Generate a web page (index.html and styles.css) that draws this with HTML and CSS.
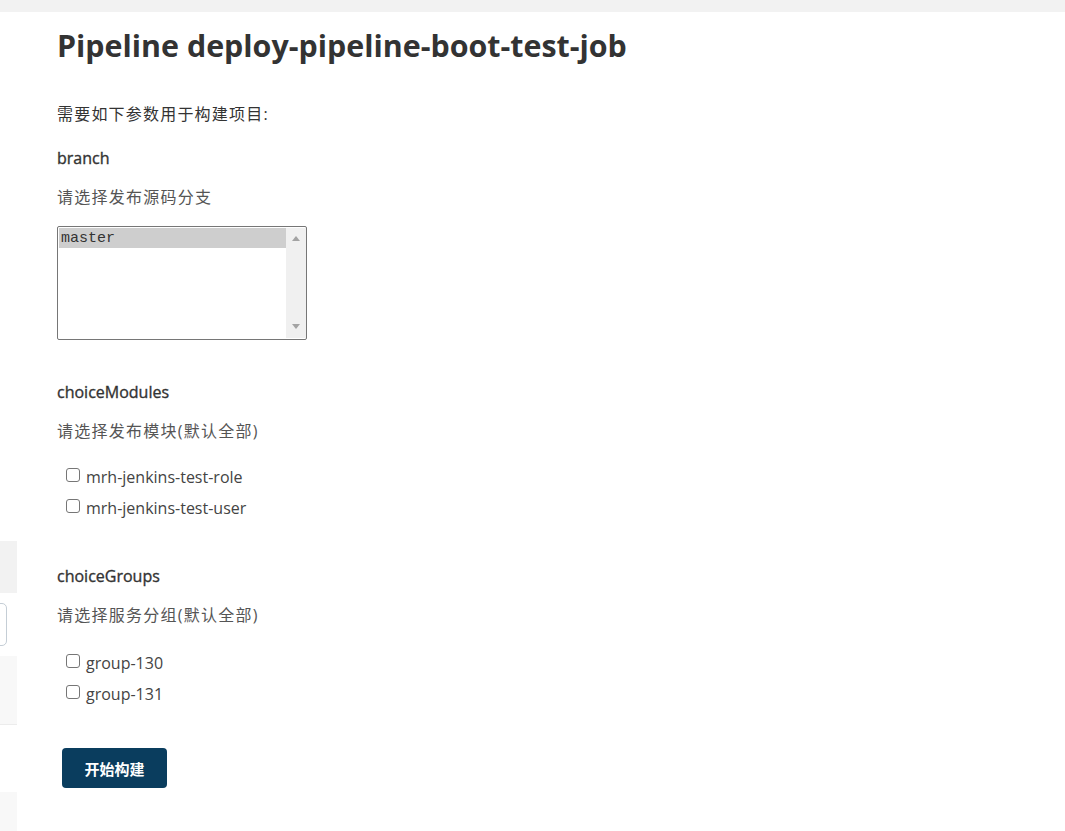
FILE: index.html
```html
<!DOCTYPE html>
<html lang="zh-CN">
<head>
<meta charset="utf-8">
<title>Pipeline deploy-pipeline-boot-test-job</title>
<link rel="stylesheet" href="styles.css">
</head>
<body>
<div class="topbar"></div>
<div class="layout">
  <aside class="side">
    <div class="side-block side-a"></div>
    <div class="side-box"></div>
    <div class="side-block side-b"></div>
    <div class="side-block side-c"></div>
  </aside>
  <main class="main">
    <h1 class="title">Pipeline deploy-pipeline-boot-test-job</h1>
    <p class="intro">需要如下参数用于构建项目:</p>

    <section class="param">
      <div class="param-name">branch</div>
      <div class="param-desc">请选择发布源码分支</div>
      <div class="listbox">
        <div class="list-items">
          <div class="list-item selected">master</div>
        </div>
        <div class="scrollbar">
          <span class="arrow up"></span>
          <span class="arrow down"></span>
        </div>
      </div>
    </section>

    <section class="param param-modules">
      <div class="param-name">choiceModules</div>
      <div class="param-desc">请选择发布模块(默认全部)</div>
      <div class="checks">
        <label class="check"><span class="box"></span>mrh-jenkins-test-role</label>
        <label class="check"><span class="box"></span>mrh-jenkins-test-user</label>
      </div>
    </section>

    <section class="param param-groups">
      <div class="param-name">choiceGroups</div>
      <div class="param-desc">请选择服务分组(默认全部)</div>
      <div class="checks">
        <label class="check"><span class="box"></span>group-130</label>
        <label class="check"><span class="box"></span>group-131</label>
      </div>
    </section>

    <button class="build-btn" type="button">开始构建</button>
  </main>
</div>
</body>
</html>
```

FILE: styles.css
```css
* { box-sizing: border-box; }
html, body {
  margin: 0;
  padding: 0;
  background: #fff;
}
body {
  font-family: "Open Sans", "Noto Sans", "Noto Sans CJK SC", sans-serif;
  color: #333;
  width: 1065px;
  height: 831px;
  overflow: hidden;
}
.topbar {
  height: 12px;
  background: #f2f2f2;
}
.layout {
  display: flex;
}
.side {
  width: 17px;
  flex: none;
  display: flex;
  flex-direction: column;
}
.side-block {
  width: 17px;
}
.side-a {
  margin-top: 529px;
  height: 52px;
  background: #f2f2f2;
}
.side-box {
  margin-top: 10px;
  margin-left: -10px;
  width: 17px;
  height: 43px;
  border: 1px solid #c5ced6;
  border-radius: 5px;
}
.side-b {
  margin-top: 10px;
  height: 69px;
  background: #f8f8f8;
  border-bottom: 1px solid #ececec;
}
.side-c {
  margin-top: 67px;
  height: 40px;
  background: #f8f8f8;
}
.main {
  padding-left: 40px;
  flex: 1;
}
.title {
  margin: 16px 0 0;
  font-size: 30.4px;
  line-height: 36px;
  font-weight: 700;
  color: #333;
}
.intro {
  margin: 38px 0 0;
  font-size: 16px;
  line-height: 24px;
  color: #333;
  letter-spacing: 1.2px;
}
.param {
  margin-top: 20px;
}
.param-modules {
  margin-top: 40px;
}
.param-groups {
  margin-top: 44px;
}
.param-name {
  font-size: 16px;
  line-height: 24px;
  font-weight: 400;
  -webkit-text-stroke: 0.35px #333;
  color: #333;
}
.param-desc {
  margin-top: 15px;
  font-size: 16px;
  line-height: 24px;
  color: #555;
  letter-spacing: 1.25px;
}
.listbox {
  margin-top: 17px;
  width: 250px;
  height: 114px;
  border: 1px solid #767676;
  border-radius: 2px;
  display: flex;
  padding: 1px 0 1px 1px;
}
.list-items {
  flex: 1;
}
.list-item {
  height: 20px;
  line-height: 22px;
  padding-left: 2px;
  font-family: "Liberation Mono", "Courier New", monospace;
  font-size: 15px;
  color: #333;
}
.list-item.selected {
  background: #cecece;
}
.scrollbar {
  width: 20px;
  background: #f0f0f0;
  display: flex;
  flex-direction: column;
  justify-content: space-between;
  align-items: center;
  padding: 8px 0 9px;
}
.arrow {
  width: 0;
  height: 0;
  border-left: 4px solid transparent;
  border-right: 4px solid transparent;
}
.arrow.up {
  border-bottom: 5px solid #a3a3a3;
}
.arrow.down {
  border-top: 5px solid #a3a3a3;
}
.checks {
  margin-top: 22px;
  display: flex;
  flex-direction: column;
  gap: 7px;
  padding-left: 9px;
}
.param-groups .checks {
  margin-top: 24px;
}
.check {
  display: flex;
  align-items: center;
  height: 24px;
  font-size: 16px;
  color: #444;
}
.box {
  width: 14px;
  height: 14px;
  border: 1px solid #767676;
  border-radius: 3px;
  margin-right: 6px;
  margin-top: -5px;
  background: #fff;
  flex: none;
}
.build-btn {
  margin: 42px 0 0 5px;
  width: 105px;
  height: 40px;
  border: none;
  border-radius: 4px;
  background: #0a3d5e;
  color: #fff;
  font-family: "Noto Sans CJK SC", sans-serif;
  font-weight: 700;
  font-size: 15px;
  display: block;
}
```
